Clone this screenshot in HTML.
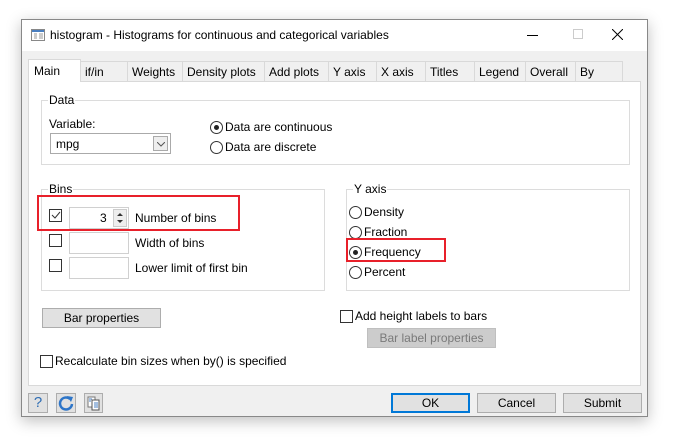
<!DOCTYPE html><html><head><style>
*{box-sizing:border-box;margin:0;padding:0}
body{width:685px;height:437px;background:#fff;font-family:"Liberation Sans",sans-serif;font-size:12px;color:#000;position:relative;overflow:hidden}
.a{position:absolute}
.win{left:21px;top:19px;width:627px;height:398px;border:1px solid #888;background:#f0f0f0;box-shadow:0 4px 14px rgba(0,0,0,.25)}
.title{left:0;top:0;width:625px;height:31px;background:#fff}
.tab{top:41px;height:20px;border:1px solid #d9d9d9;border-bottom:none;background:#f0f0f0;padding:3px 0 0 4px;white-space:nowrap}
.panel{left:6px;top:61px;width:613px;height:305px;background:#fff;border:1px solid #d9d9d9}
.grp{border:1px solid #dcdcdc}
.lg{background:#fff;padding:0 1px;top:-8px}
.rad{width:13px;height:13px;border:1px solid #333;border-radius:50%;background:#fff}
.rad.on::after{content:"";position:absolute;left:3px;top:3px;width:5px;height:5px;border-radius:50%;background:#222}
.cb{width:13px;height:13px;border:1px solid #333;background:#fff}
.ed{border:1px solid #d0d0d0;background:#fff}
.btn{background:#e1e1e1;border:1px solid #adadad;text-align:center;line-height:18px}
.red{border:2px solid #e8202a}
</style></head><body>
<div class="a win">
 <div class="a title">
  <svg class="a" style="left:9px;top:9px" width="14" height="12"><rect x=".5" y=".5" width="13" height="11" fill="#fff" stroke="#888"/><rect x="1" y="1" width="12" height="2" fill="#4a7fc0"/><path d="M3 5h3M3 7h3M3 9h3M8 5h4M8 7h4M8 9h4" stroke="#999"/></svg>
  <div class="a" style="left:28px;top:8px">histogram - Histograms for continuous and categorical variables</div>
  <div class="a" style="left:505px;top:15px;width:11px;height:1px;background:#000"></div>
  <div class="a" style="left:551px;top:9px;width:10px;height:10px;border:1px solid #ccc"></div>
  <svg class="a" style="left:590px;top:9px" width="11" height="11"><path d="M0 0L11 11M11 0L0 11" stroke="#000"/></svg>
 </div>
 <div class="a tab" style="left:58px;width:48px;padding-left:4px"><span style="margin-left:0">if/in</span></div>
 <div class="a tab" style="left:105px;width:56px">Weights</div>
 <div class="a tab" style="left:160px;width:83px">Density plots</div>
 <div class="a tab" style="left:242px;width:65px">Add plots</div>
 <div class="a tab" style="left:306px;width:49px">Y axis</div>
 <div class="a tab" style="left:354px;width:50px">X axis</div>
 <div class="a tab" style="left:403px;width:50px">Titles</div>
 <div class="a tab" style="left:452px;width:52px">Legend</div>
 <div class="a tab" style="left:503px;width:51px">Overall</div>
 <div class="a tab" style="left:553px;width:48px">By</div>
 <div class="a panel">
  <div class="a grp" style="left:12px;top:18px;width:589px;height:65px"><div class="a lg" style="left:6px">Data</div></div>
  <div class="a" style="left:20px;top:35px">Variable:</div>
  <div class="a ed" style="left:21px;top:51px;width:121px;height:21px;border-color:#aaa"><span class="a" style="left:5px;top:3px">mpg</span><div class="a" style="right:2px;top:2px;width:15px;height:15px;border:1px solid #aaa;background:#eee"><svg class="a" style="left:3px;top:5px" width="8" height="5"><path d="M0 0L4 4L8 0" stroke="#555" fill="none"/></svg></div></div>
  <div class="a rad on" style="left:181px;top:39px"></div><div class="a" style="left:196px;top:38px">Data are continuous</div>
  <div class="a rad" style="left:181px;top:59px"></div><div class="a" style="left:196px;top:58px">Data are discrete</div>

  <div class="a grp" style="left:12px;top:107px;width:284px;height:102px"><div class="a lg" style="left:6px">Bins</div></div>
  <div class="a cb" style="left:20px;top:127px"></div><svg class="a" style="left:22px;top:129px" width="10" height="9"><path d="M1 4L4 7L9 1" stroke="#333" fill="none"/></svg>
  <div class="a ed" style="left:40px;top:125px;width:60px;height:22px"><span class="a" style="left:30px;top:3px">3</span><div class="a" style="right:1px;top:1px;width:14px;height:18px;background:#eee;border:1px solid #ccc"><svg width="12" height="16"><path d="M3 6L6 3L9 6z M3 10L6 13L9 10z" fill="#333"/></svg></div></div>
  <div class="a" style="left:106px;top:129px">Number of bins</div>
  <div class="a cb" style="left:20px;top:152px"></div><div class="a ed" style="left:40px;top:150px;width:60px;height:22px"></div><div class="a" style="left:106px;top:154px">Width of bins</div>
  <div class="a cb" style="left:20px;top:177px"></div><div class="a ed" style="left:40px;top:175px;width:60px;height:22px"></div><div class="a" style="left:106px;top:179px">Lower limit of first bin</div>
  <div class="a red" style="left:8px;top:113px;width:203px;height:36px"></div>

  <div class="a grp" style="left:317px;top:107px;width:284px;height:102px"><div class="a lg" style="left:6px">Y axis</div></div>
  <div class="a rad" style="left:320px;top:124px"></div><div class="a" style="left:335px;top:123px">Density</div>
  <div class="a rad" style="left:320px;top:144px"></div><div class="a" style="left:335px;top:143px">Fraction</div>
  <div class="a rad on" style="left:320px;top:164px"></div><div class="a" style="left:335px;top:163px">Frequency</div>
  <div class="a rad" style="left:320px;top:184px"></div><div class="a" style="left:335px;top:183px">Percent</div>
  <div class="a red" style="left:317px;top:156px;width:100px;height:24px"></div>

  <div class="a btn" style="left:13px;top:226px;width:119px;height:20px">Bar properties</div>
  <div class="a cb" style="left:311px;top:228px"></div><div class="a" style="left:326px;top:227px">Add height labels to bars</div>
  <div class="a btn" style="left:338px;top:246px;width:129px;height:20px;background:#ccc;border-color:#bfbfbf;color:#7a7a7a">Bar label properties</div>
  <div class="a cb" style="left:11px;top:273px"></div><div class="a" style="left:26px;top:272px">Recalculate bin sizes when by() is specified</div>
 </div>
 <div class="a btn" style="left:6px;top:373px;width:20px;height:20px;color:#2e6db4;font-size:15px">?</div>
 <div class="a btn" style="left:34px;top:373px;width:20px;height:20px"><svg width="18" height="18"><path d="M13 5A6 6 0 1 0 15 10" stroke="#2e75c8" stroke-width="2.5" fill="none"/><path d="M10 2L16 3L14 8z" fill="#2e75c8"/></svg></div>
 <div class="a btn" style="left:62px;top:373px;width:19px;height:20px"><svg width="17" height="18"><rect x="3" y="3" width="7" height="10" fill="#fff" stroke="#777"/><rect x="7" y="6" width="7" height="10" fill="#fff" stroke="#555"/><path d="M4 5h3M4 7h2M9 9h4M9 11h4M9 13h4" stroke="#4a7fc0"/></svg></div>
 <div class="a btn" style="left:369px;top:373px;width:79px;height:20px;border:2px solid #0078d7;line-height:16px">OK</div>
 <div class="a btn" style="left:455px;top:373px;width:79px;height:20px">Cancel</div>
 <div class="a btn" style="left:541px;top:373px;width:79px;height:20px">Submit</div>
 <div class="a" style="left:6px;top:39px;width:53px;height:23px;background:#fff;border:1px solid #d9d9d9;border-bottom:none;padding:4px 0 0 5px">Main</div>
</div>
</body></html>
